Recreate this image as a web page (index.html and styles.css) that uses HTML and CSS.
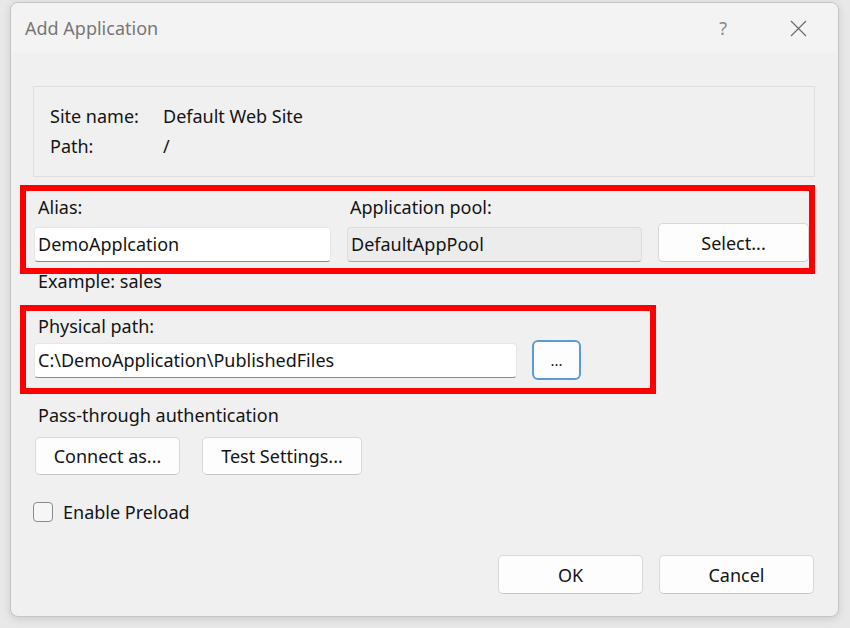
FILE: index.html
```html
<!DOCTYPE html>
<html lang="en">
  <head>
    <meta charset="UTF-8" />
    <title>Add Application</title>
    <link rel="stylesheet" href="styles.css">
  </head>
  <body>
    <div class="dialog">
      <div class="titlebar">
        <span class="title">Add Application</span>
        <span class="help">?</span>
        <svg class="close" width="17" height="17" viewBox="0 0 17 17">
          <path d="M1 1 L16 16 M16 1 L1 16" stroke="#6b6b6b" stroke-width="1.2" fill="none" />
        </svg>
      </div>

      <div class="content">
        <!-- site info -->
        <div class="info">
          <div class="info-row"><span class="info-label">Site name:</span><span>Default Web Site</span></div>
          <div class="info-row"><span class="info-label">Path:</span><span>/</span></div>
        </div>

        <!-- alias + pool -->
        <div class="mark mark-alias">
          <div class="alias-grid">
            <label class="lbl">Alias:</label>
            <label class="lbl lbl-pool">Application pool:</label>
            <span></span>
            <div class="field">DemoApplcation</div>
            <div class="field field-ro">DefaultAppPool</div>
            <button class="btn btn-select">Select...</button>
          </div>
        </div>

        <div class="hint">Example: sales</div>

        <!-- physical path -->
        <div class="mark mark-path">
          <label class="lbl">Physical path:</label>
          <div class="path-row">
            <div class="field field-path">C:\DemoApplication\PublishedFiles</div>
            <button class="btn btn-browse">...</button>
          </div>
        </div>

        <div class="section">Pass-through authentication</div>
        <div class="auth-row">
          <button class="btn btn-connect">Connect as...</button>
          <button class="btn btn-test">Test Settings...</button>
        </div>

        <div class="check-row">
          <span class="checkbox"></span>
          <span>Enable Preload</span>
        </div>

        <div class="footer">
          <button class="btn btn-ok">OK</button>
          <button class="btn btn-cancel">Cancel</button>
        </div>
      </div>
    </div>
  </body>
</html>
```

FILE: styles.css
```css
body {
  margin: 0;
  background-color: #e8e8e8;
  font-family: "Noto Sans", "Open Sans", sans-serif;
  font-size: 18px;
  color: #141414;
  height: 628px;
  overflow: hidden;
}

.dialog {
  box-sizing: border-box;
  width: 829px;
  height: 615px;
  margin: 2px 0 0 10px;
  background-color: #f0f0f0;
  border: 1px solid #c4c4c4;
  border-radius: 8px;
  box-shadow: 0 2px 8px rgba(0, 0, 0, 0.12);
  display: flex;
  flex-direction: column;
  overflow: hidden;
}

.titlebar {
  height: 50px;
  background-color: #f3f3f3;
  display: flex;
  align-items: center;
  padding-left: 14px;
  flex-shrink: 0;
}

.title {
  font-size: 18px;
  color: #777;
  flex: 1;
}

.help {
  font-size: 18px;
  color: #8a8a8a;
  margin-right: 63px;
}

.close {
  margin-right: 31px;
}

.content {
  flex: 1;
  display: flex;
  flex-direction: column;
}

.info {
  box-sizing: border-box;
  margin: 33px 0 0 22px;
  width: 782px;
  height: 91px;
  border: 1px solid #dedede;
  padding: 14px 0 0 16px;
}

.info-row {
  display: flex;
  line-height: 30px;
}

.info-label {
  width: 113px;
}

.mark {
  box-sizing: border-box;
  border: 6px solid #ff0000;
  margin-left: 9px;
}

.mark-alias {
  width: 795px;
  height: 89px;
  margin-top: 8px;
  padding: 4px 0 0 8px;
}

.alias-grid {
  display: grid;
  grid-template-columns: 297px 295px 151px;
  column-gap: 16px;
  align-items: center;
}

.lbl {
  display: block;
  line-height: 24px;
  padding-left: 4px;
}

.lbl-pool {
  padding-left: 3px;
}

.field {
  box-sizing: border-box;
  height: 35px;
  line-height: 32px;
  padding-left: 3px;
  background-color: #fff;
  border: 1px solid #e6e6e6;
  border-bottom: 1px solid #8c8c8c;
  border-radius: 4px;
  margin-top: 7px;
  white-space: nowrap;
}

.field-ro {
  background-color: #ececec;
  border-color: #dcdcdc;
  border-bottom-color: #a8a8a8;
}

.btn {
  box-sizing: border-box;
  font-family: inherit;
  font-size: 18px;
  color: #141414;
  background-color: #fdfdfd;
  border: 1px solid #d8d8d8;
  border-bottom-color: #c6c6c6;
  border-radius: 5px;
  padding: 0;
}

.btn-select {
  height: 39px;
  margin-top: 4px;
}

.hint {
  line-height: 18px;
  margin: -2px 0 0 27px;
}

.mark-path {
  width: 636px;
  height: 89px;
  margin-top: 15px;
  padding: 3px 0 0 8px;
}

.path-row {
  display: flex;
  align-items: center;
  gap: 15px;
  margin-top: 2px;
}

.field-path {
  width: 483px;
  margin-top: 0;
}

.btn-browse {
  width: 49px;
  height: 40px;
  border: 2px solid #5b9bd5;
  border-radius: 6px;
  font-size: 15px;
}

.section {
  line-height: 24px;
  margin: 9px 0 0 27px;
}

.auth-row {
  display: flex;
  gap: 22px;
  margin: 10px 0 0 24px;
}

.btn-connect {
  width: 145px;
  height: 38px;
}

.btn-test {
  width: 160px;
  height: 38px;
}

.check-row {
  display: flex;
  align-items: center;
  gap: 10px;
  margin: 25px 0 0 22px;
}

.checkbox {
  box-sizing: border-box;
  width: 20px;
  height: 20px;
  border: 1px solid #8a8a8a;
  border-radius: 4px;
  background-color: #f6f6f6;
}

.footer {
  margin-top: auto;
  display: flex;
  justify-content: flex-end;
  gap: 16px;
  padding: 0 24px 22px 0;
}

.btn-ok {
  width: 145px;
  height: 39px;
}

.btn-cancel {
  width: 155px;
  height: 39px;
}
```
